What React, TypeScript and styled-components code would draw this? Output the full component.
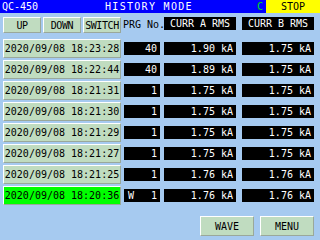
import { Fragment } from 'react'
import styled, { createGlobalStyle } from 'styled-components'

const GlobalStyle = createGlobalStyle`
    html, body {
        margin: 0;
        padding: 0;
        background: #a6caf0;
    }
    body {
        font-family: "DejaVu Sans Mono", "Liberation Mono", monospace;
        font-size: 10px;
    }
`

interface HistoryRow {
    time: string
    prg: string
    flag?: string
    currA: string
    currB: string
    current?: boolean
}

const rows: HistoryRow[] = [
    { time: '2020/09/08 18:23:28', prg: '40', currA: '1.90 kA', currB: '1.75 kA' },
    { time: '2020/09/08 18:22:44', prg: '40', currA: '1.89 kA', currB: '1.75 kA' },
    { time: '2020/09/08 18:21:31', prg: '1', currA: '1.75 kA', currB: '1.75 kA' },
    { time: '2020/09/08 18:21:30', prg: '1', currA: '1.75 kA', currB: '1.75 kA' },
    { time: '2020/09/08 18:21:29', prg: '1', currA: '1.75 kA', currB: '1.75 kA' },
    { time: '2020/09/08 18:21:27', prg: '1', currA: '1.75 kA', currB: '1.75 kA' },
    { time: '2020/09/08 18:21:25', prg: '1', currA: '1.76 kA', currB: '1.76 kA' },
    {
        time: '2020/09/08 18:20:36',
        prg: '1',
        flag: 'W',
        currA: '1.76 kA',
        currB: '1.76 kA',
        current: true,
    },
]

const Screen = styled.div`
    width: 320px;
    height: 240px;
    overflow: hidden;
    background: #a6caf0;
    display: flex;
    flex-direction: column;
`

const TitleBar = styled.div`
    height: 13px;
    display: flex;
    align-items: center;
    background: #0000ff;
    color: #ffffff;
    line-height: 13px;
`

const MachineName = styled.div`
    width: 103px;
    padding-left: 2px;
`

const ModeName = styled.div`
    flex: 1;
    letter-spacing: 1.3px;
`

const StatusLetter = styled.div`
    width: 9px;
    color: #00e000;
`

const StopBox = styled.div`
    width: 54px;
    height: 13px;
    background: #ffff00;
    color: #000000;
    text-align: center;
`

const Table = styled.div`
    display: grid;
    grid-template-columns: 121px 39px 76px 78px;
    grid-auto-rows: 19px;
    row-gap: 2px;
    padding-top: 5px;
    align-items: center;
`

const HeaderRow = styled.div`
    grid-column: 1 / -1;
    display: grid;
    grid-template-columns: subgrid;
    height: 16px;
    align-items: start;
    margin-bottom: 5px;
`

const NavButtons = styled.div`
    display: flex;
    gap: 2px;
    padding-left: 3px;
`

const Bevel = styled.div`
    box-sizing: border-box;
    background: #c0dcc0;
    border-top: 1px solid #ffffff;
    border-left: 1px solid #ffffff;
    border-bottom: 1px solid #9aa89a;
    border-right: 1px solid #9aa89a;
    color: #000000;
    display: flex;
    align-items: center;
    justify-content: center;
`

const NavButton = styled(Bevel)`
    width: 38px;
    height: 16px;
    letter-spacing: -0.4px;
    white-space: nowrap;
`

const PrgLabel = styled.div`
    padding-top: 2px;
    padding-left: 2px;
    white-space: nowrap;
    color: #000000;
`

const ColumnTitle = styled.div`
    justify-self: end;
    width: 72px;
    height: 13px;
    background: #000000;
    color: #ffffff;
    display: flex;
    align-items: center;
    justify-content: center;
    white-space: pre;
`

const DateCell = styled(Bevel)<{ $current?: boolean }>`
    margin-left: 3px;
    height: 19px;
    background: ${({ $current }) => ($current ? '#00ff00' : '#c0dcc0')};
    white-space: pre;
`

const ValueCell = styled.div<{ $width: number }>`
    justify-self: end;
    width: ${({ $width }) => $width}px;
    height: 13px;
    box-sizing: border-box;
    padding: 0 3px 0 4px;
    background: #000000;
    color: #ffffff;
    display: flex;
    align-items: center;
    justify-content: space-between;
    white-space: pre;
`

const Footer = styled.div`
    display: flex;
    justify-content: flex-end;
    gap: 6px;
    padding: 0 6px 4px 0;
    margin-top: auto;
`

const FooterButton = styled(Bevel)`
    width: 54px;
    height: 20px;
`

export default function App() {
    return (
        <>
            <GlobalStyle />
            <Screen>
                <TitleBar>
                    <MachineName>QC-450</MachineName>
                    <ModeName>HISTORY MODE</ModeName>
                    <StatusLetter>C</StatusLetter>
                    <StopBox>STOP</StopBox>
                </TitleBar>
                <Table>
                    <HeaderRow>
                        <NavButtons>
                            <NavButton>UP</NavButton>
                            <NavButton>DOWN</NavButton>
                            <NavButton>SWITCH</NavButton>
                        </NavButtons>
                        <PrgLabel>PRG No.</PrgLabel>
                        <ColumnTitle>CURR A RMS</ColumnTitle>
                        <ColumnTitle>CURR B RMS</ColumnTitle>
                    </HeaderRow>
                    {rows.map((row) => (
                        <Fragment key={row.time}>
                            <DateCell $current={row.current}>{row.time}</DateCell>
                            <ValueCell $width={36}>
                                <span>{row.flag ?? ''}</span>
                                <span>{row.prg}</span>
                            </ValueCell>
                            <ValueCell $width={72}>
                                <span />
                                <span>{row.currA}</span>
                            </ValueCell>
                            <ValueCell $width={72}>
                                <span />
                                <span>{row.currB}</span>
                            </ValueCell>
                        </Fragment>
                    ))}
                </Table>
                <Footer>
                    <FooterButton>WAVE</FooterButton>
                    <FooterButton>MENU</FooterButton>
                </Footer>
            </Screen>
        </>
    )
}
